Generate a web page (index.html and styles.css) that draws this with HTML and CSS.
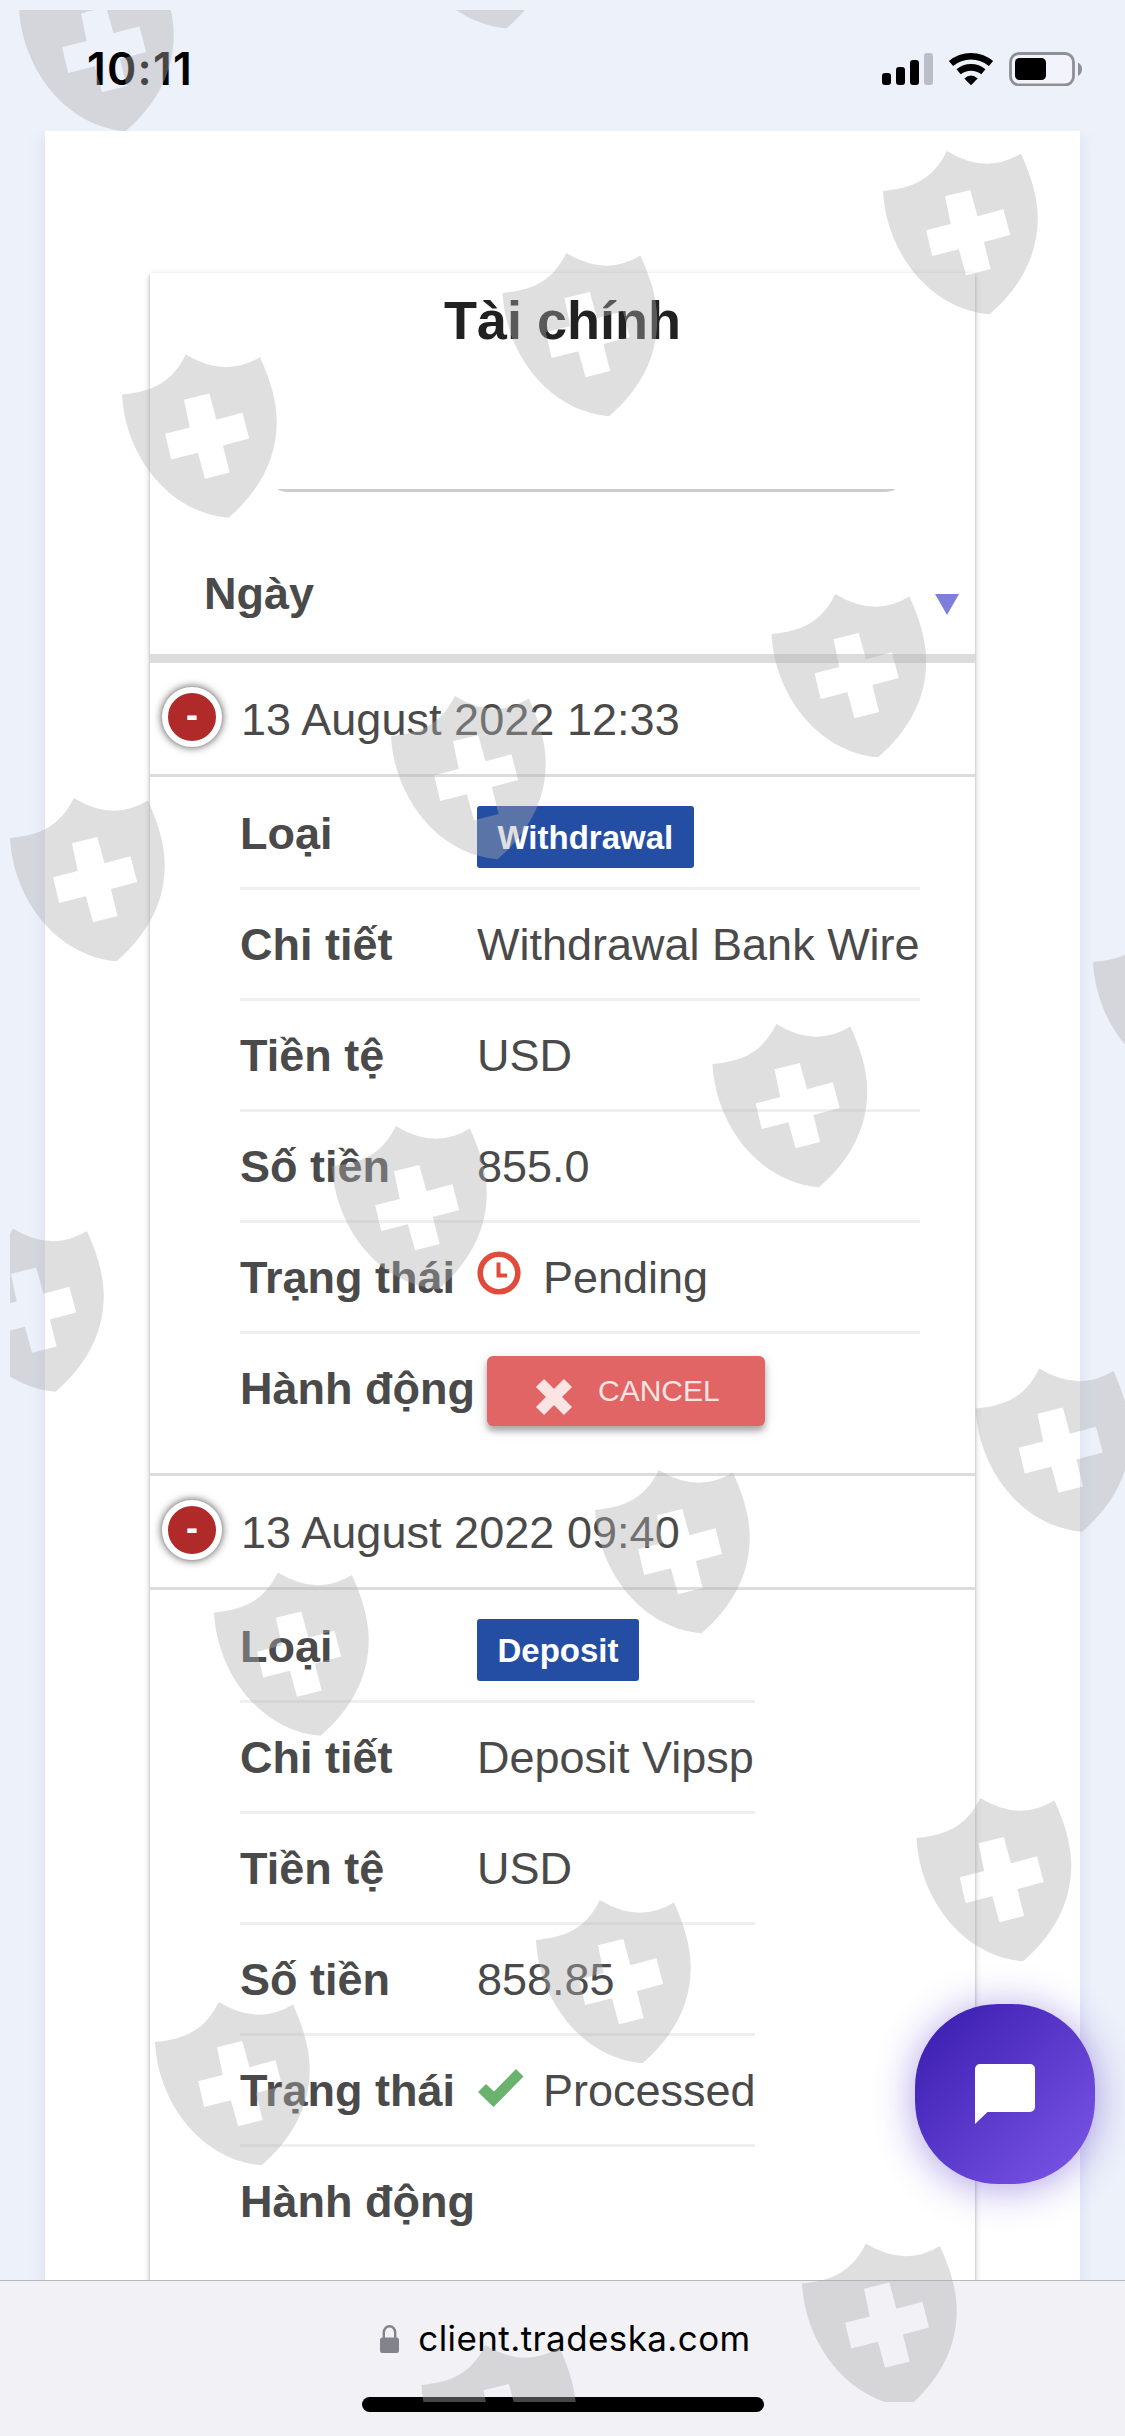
FILE: index.html
```
<!DOCTYPE html>
<html lang="vi">
<head>
<meta charset="utf-8">
<title>Tài chính</title>
<link rel="stylesheet" href="styles.css">
</head>
<body>
<header class="status">
  <span class="clock">10:11</span>
  <svg class="status-icons" viewBox="0 0 201 34" width="201" height="34">
    <rect x="0" y="21" width="9" height="12" rx="3"/>
    <rect x="14" y="15" width="9" height="18" rx="3"/>
    <rect x="28" y="8" width="9" height="25" rx="3"/>
    <rect x="42" y="1" width="9" height="32" rx="3" fill="#bbbec8"/>
    <g fill="none" stroke="#000" stroke-width="6.6">
      <path d="M69 11.500a31 31 0 0 1 40 0"/>
      <path d="M76.600 19.800a19.500 19.500 0 0 1 24.800 0"/>
    </g>
    <path d="M82.300 26.400Q89 20.600 95.700 26.400L89 33.200Z"/>
    <rect x="128.500" y="1.500" width="63" height="31.500" rx="8.500" fill="#f3f4fb" stroke="#8e9096" stroke-width="2.800"/>
    <rect x="133" y="6" width="31" height="22" rx="4.500"/>
    <path d="M196 10.500q4 2 4 6.700t-4 6.700z" fill="#8e9096"/>
  </svg>
</header>

<main class="viewport">
  <section class="panel">
    <article class="card">
      <h1 class="title">Tài chính</h1>
      <div class="field"><div class="underline"></div></div>
      <div class="table-head"><span>Ngày</span><i class="sort"></i></div>

      <section class="entry">
        <div class="date"><b class="toggle">-</b><span>13 August 2022 12:33</span></div>
        <ul class="details wide">
          <li><b>Loại</b><span class="badge">Withdrawal</span></li>
          <li><b>Chi tiết</b><span>Withdrawal Bank Wire</span></li>
          <li><b>Tiền tệ</b><span>USD</span></li>
          <li><b>Số tiền</b><span>855.0</span></li>
          <li><b>Trạng thái</b>
            <svg class="state pending" viewBox="0 0 44 44" width="44" height="44"><circle cx="22" cy="22" r="18.800" fill="none" stroke="#e14b3b" stroke-width="5.600"/><path d="M21.500 11.500V24.500H30" fill="none" stroke="#e14b3b" stroke-width="4"/></svg>
            <span>Pending</span></li>
          <li><b>Hành động</b>
            <button class="cancel"><svg viewBox="0 0 38 38" width="38" height="38"><path d="M5 5L33 33M33 5L5 33" stroke="#fae4e4" stroke-width="11.500"/></svg>CANCEL</button></li>
        </ul>
      </section>

      <section class="entry">
        <div class="date"><b class="toggle">-</b><span>13 August 2022 09:40</span></div>
        <ul class="details">
          <li><b>Loại</b><span class="badge">Deposit</span></li>
          <li><b>Chi tiết</b><span>Deposit Vipsp</span></li>
          <li><b>Tiền tệ</b><span>USD</span></li>
          <li><b>Số tiền</b><span>858.85</span></li>
          <li><b>Trạng thái</b>
            <svg class="state done" viewBox="0 0 46 38" width="46" height="38"><path d="M0 23L8 15L16 22.500L38 0L45.500 7.500L15.500 38Z" fill="#69b36e"/></svg>
            <span>Processed</span></li>
          <li><b>Hành động</b></li>
        </ul>
      </section>
    </article>
  </section>
</main>

<footer class="browser">
  <div class="address">
    <svg viewBox="0 0 19 28" width="19" height="28"><path d="M3.800 14V7.500a5.700 6.200 0 0 1 11.400 0V14" fill="none" stroke="#83838c" stroke-width="2.400"/><rect x="0" y="12.500" width="19" height="15.500" rx="2.500" fill="#83838c"/></svg>
    <span>client.tradeska.com</span>
  </div>
  <div class="home"></div>
</footer>

<button class="chat" aria-label="Chat">
  <svg viewBox="0 0 60 60" width="60" height="60"><path d="M5 0H55a5 5 0 0 1 5 5V43a5 5 0 0 1-5 5H12.500L0 60V5a5 5 0 0 1 5-5Z" fill="#fff"/></svg>
</button>

<svg class="watermark" viewBox="10 10 1115 2392" width="1115" height="2392" aria-hidden="true">
  <defs>
    <path id="shield" transform="scale(.992 1)" fill-rule="evenodd" d="M0 40C30 37 50 29 64.300 0Q104 24 139 2.600C148 22 156 45 156 67C156 105 138 137 107.400 163.300C46 158 3 100 0 40ZM62.500 45.300L88 39L95.200 65.300L121.400 58.300L128.200 84L101.700 91L108.500 118L83.700 124.300L76.500 98.300L49.600 105L43.500 79.300L68.300 73Z"/>
  </defs>
  <g fill="#afafaf" fill-opacity=".4">
    <use href="#shield" x="19" y="-32"/>
    <use href="#shield" x="400" y="-135"/>
    <use href="#shield" x="883" y="151"/>
    <use href="#shield" x="502.500" y="253"/>
    <use href="#shield" x="122" y="354.500"/>
    <use href="#shield" x="771.500" y="594"/>
    <use href="#shield" x="391" y="696"/>
    <use href="#shield" x="10" y="798"/>
    <use href="#shield" x="1093" y="922"/>
    <use href="#shield" x="712.500" y="1024"/>
    <use href="#shield" x="332" y="1126"/>
    <use href="#shield" x="-51" y="1228.500"/>
    <use href="#shield" x="975.500" y="1368.500"/>
    <use href="#shield" x="595" y="1470"/>
    <use href="#shield" x="214" y="1572.500"/>
    <use href="#shield" x="916.500" y="1798"/>
    <use href="#shield" x="536" y="1900"/>
    <use href="#shield" x="155" y="2002"/>
    <use href="#shield" x="802" y="2243.500"/>
    <use href="#shield" x="421.500" y="2345"/>
  </g>
</svg>
</body>
</html>
```
FILE: styles.css
```
* { box-sizing: border-box; }

body {
  position: relative;
  width: 1125px;
  height: 2436px;
  margin: 0;
  overflow: hidden;
  display: flex;
  flex-direction: column;
  background: #edf1fa;
  color: #4a4a4a;
  font-family: "Liberation Sans", Arial, sans-serif;
  font-size: 45px;
}

svg { display: block; flex: none; }
button { border: 0; padding: 0; font-family: inherit; }

/* Status bar */
.status {
  height: 131px;
  flex: none;
  display: flex;
  justify-content: space-between;
  align-items: flex-start;
  padding: 52px 42px 0 87px;
}
.clock {
  color: #000;
  font: 600 44.5px/34px Inter, sans-serif;
  letter-spacing: 1.2px;
}

/* Page */
.viewport {
  height: 2149px;
  flex: none;
  overflow: hidden;
}
.panel {
  margin: 0 45px;
  padding: 142px 105px 0;
  height: 2400px;
  background: #fff;
  box-shadow: 0 6px 14px rgba(150, 160, 215, .25);
}
.card {
  width: 825px;
  height: 2300px;
  background: #fff;
  box-shadow: 0 2px 7px rgba(0, 0, 0, .18), 0 2px 3px rgba(0, 0, 0, .22);
}
.title {
  margin: 0;
  color: #212121;
  font-size: 54px;
  line-height: 94px;
  height: 95px;
  text-align: center;
}
.field {
  height: 124px;
  display: flex;
  align-items: flex-end;
  padding-left: 128px;
}
.underline {
  width: 617px;
  height: 3px;
  border-radius: 0 0 12px 12px / 0 0 3px 3px;
  background: #ccc;
}
.table-head {
  height: 171px;
  display: flex;
  justify-content: space-between;
  padding: 71px 16px 0 54px;
  border-bottom: 9px solid #dcdcdc;
  font-weight: 700;
  line-height: 62px;
}
.sort {
  width: 0;
  height: 0;
  margin-top: 31px;
  border: solid transparent;
  border-width: 21px 12.5px 0;
  border-top-color: #7f7fdb;
}

.entry + .entry { border-top: 3px solid #dcdcdc; }
.date {
  height: 114px;
  display: flex;
  gap: 19px;
  padding-left: 12px;
  border-bottom: 3px solid #dcdcdc;
  line-height: 113px;
  letter-spacing: .04px;
}
.toggle {
  width: 60px;
  height: 60px;
  margin-top: 24px;
  border: 6px solid #fff;
  border-radius: 50%;
  background: #b02a2a;
  box-shadow: 0 0 9px #444;
  color: #fff;
  font-size: 36px;
  line-height: 43px;
  text-align: center;
}

.details {
  width: 515px;
  margin: 0 0 0 90px;
  padding: 2px 0 28px;
  list-style: none;
}
.details.wide { width: 680px; }
.details li {
  height: 111px;
  display: flex;
  align-items: center;
  border-bottom: 3px solid #efefef;
  line-height: 108px;
  white-space: nowrap;
}
.details li:last-child { border-bottom-color: transparent; }
.details b, .details span:not(.badge) { padding-top: 2px; }
.details b { width: 237px; flex: none; }
.badge {
  height: 62px;
  margin-top: 8px;
  padding: 0 20.5px;
  border-radius: 3px;
  background: #244ea3;
  color: #fff;
  font-size: 33px;
  font-weight: 700;
  line-height: 63px;
}
.state { margin-right: 22px; }
.pending { margin-bottom: 8px; }
.done { margin-left: 1px; margin-right: 19px; margin-bottom: 4px; }
.cancel {
  width: 278px;
  height: 70px;
  margin: 6px 0 0 10px;
  padding-left: 48px;
  display: flex;
  align-items: center;
  gap: 25px;
  border-radius: 6px;
  background: #e16565;
  box-shadow: 0 5px 6px rgba(0, 0, 0, .3), 0 3px 15px rgba(0, 0, 0, .1);
  color: #fae4e4;
  font-size: 30px;
  line-height: 68px;
}
.cancel svg { margin-top: 11px; }

/* Browser address bar */
.browser {
  height: 156px;
  flex: none;
  display: flex;
  flex-direction: column;
  align-items: center;
  border-top: 1px solid #b8b8be;
  background: #f1f1f6;
}
.address {
  height: 116px;
  display: flex;
  align-items: center;
  gap: 19px;
  padding-left: 6px;
  color: #000;
  font: 400 35px/112px Inter, sans-serif;
  letter-spacing: .4px;
}
.address span { padding-bottom: 2px; }
.home {
  width: 402px;
  height: 15px;
  border-radius: 8px;
  background: #000;
}

/* Floating elements */
.chat {
  position: absolute;
  left: 915px;
  top: 2004px;
  width: 180px;
  height: 180px;
  display: flex;
  align-items: center;
  justify-content: center;
  border-radius: 83px;
  background: linear-gradient(135deg, #3c1fb2 8%, #7a55e6 95%);
  box-shadow: 0 4px 40px rgba(75, 45, 200, .45);
}
.watermark {
  position: absolute;
  left: 10px;
  top: 10px;
  pointer-events: none;
}
```
